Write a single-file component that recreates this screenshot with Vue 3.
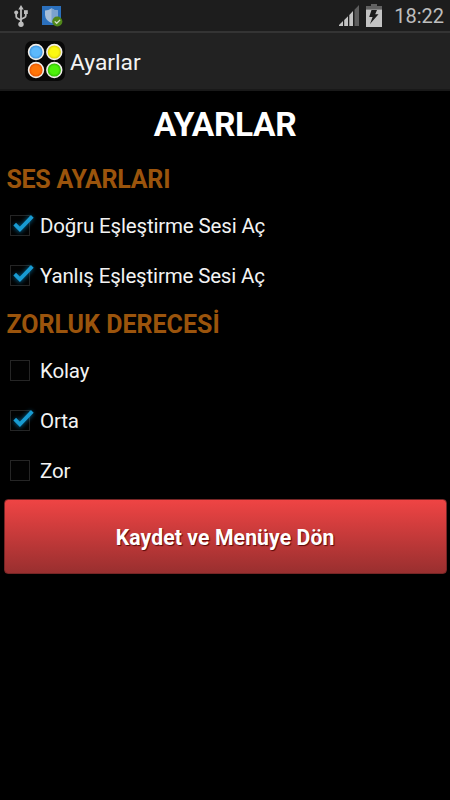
<script setup>
import { reactive } from 'vue'

const sections = reactive([
  {
    title: 'SES AYARLARI',
    cls: 'ses',
    options: [
      { label: 'Doğru Eşleştirme Sesi Aç', checked: true },
      { label: 'Yanlış Eşleştirme Sesi Aç', checked: true }
    ]
  },
  {
    title: 'ZORLUK DERECESİ',
    cls: 'zorluk',
    exclusive: true,
    options: [
      { label: 'Kolay', checked: false },
      { label: 'Orta', checked: true },
      { label: 'Zor', checked: false }
    ]
  }
])

const dots = [
  { x: 11, y: 11, fill: 'url(#blue)' },
  { x: 29.3, y: 11, fill: 'url(#yellow)' },
  { x: 11, y: 29, fill: 'url(#orange)' },
  { x: 29.3, y: 29, fill: 'url(#green)' }
]

function toggle(section, option) {
  if (section.exclusive) section.options.forEach((o) => (o.checked = o === option))
  else option.checked = !option.checked
}
</script>

<template>
  <div class="screen">
    <header class="status">
      <svg class="usb" width="16" height="23" viewBox="0 0 16 23">
        <path d="M7 0 L9.7 4.5 H4.3 Z" fill="#bdbdbd" />
        <g fill="none" stroke="#bdbdbd" stroke-width="1.8">
          <path d="M7 3 V20" />
          <path d="M2.2 8.5 V11.5 Q2.2 12.8 3.4 13.3 L7 15.3" />
          <path d="M11.8 8.5 V10.5 Q11.8 12 10.6 12.5 L7 14.3" />
        </g>
        <circle cx="2.2" cy="7.5" r="2" fill="#bdbdbd" />
        <rect x="10" y="5.2" width="3.8" height="3.8" fill="#bdbdbd" />
        <circle cx="7" cy="19.2" r="2.7" fill="#bdbdbd" />
      </svg>
      <svg class="shield" width="21" height="21" viewBox="0 0 21 21">
        <rect width="19" height="19" fill="#2b70bd" />
        <path d="M9.5 2.3 Q12.5 4.6 16 4.6 V9 Q15.5 14.5 9.5 17 Q3.5 14.5 3 9 V4.6 Q6.5 4.6 9.5 2.3Z" fill="#a8bfd8" />
        <path d="M9.5 2.3 Q12.5 4.6 16 4.6 V9 Q15.5 14.5 9.5 17Z" fill="#7ba2ce" />
        <circle cx="15.3" cy="15.5" r="5.1" fill="#508719" />
        <path d="M12.7 15.4 L14.7 17.3 L18.1 13.9" fill="none" stroke="#d4dfc8" stroke-width="1.3" />
      </svg>
      <span class="grow"></span>
      <svg class="signal" width="22" height="22" viewBox="0 0 22 22">
        <path d="M0 21 V20 L4 16 V21Z M5.2 21 V15 L9 11.2 V21Z M10.3 21 V10 L14 6 V21Z" fill="#c3c3c3" />
        <path d="M15.5 21 V4.8 L20 0 V21Z" fill="#5e5e5e" />
      </svg>
      <svg class="battery" width="16" height="23" viewBox="0 0 16 23">
        <path d="M5 0 H11 V2 H16 V6 H0 V2 H5Z" fill="#626262" />
        <rect y="5.6" width="16" height="17.4" fill="#c3c3c3" />
        <path d="M5.5 6 H11 L9.2 10.2 H12.5 L4 20 L6.6 13 H3.2Z" fill="#1d1d1d" />
      </svg>
      <span class="clock">18:22</span>
    </header>

    <div class="bar">
      <svg class="logo" width="40" height="40" viewBox="0 0 40 40">
        <defs>
          <radialGradient id="blue"><stop offset=".55" stop-color="#5cb9fc" /><stop offset="1" stop-color="#3388d5" /></radialGradient>
          <radialGradient id="yellow"><stop offset=".55" stop-color="#fbf811" /><stop offset="1" stop-color="#d3c60a" /></radialGradient>
          <radialGradient id="orange"><stop offset=".55" stop-color="#ff7508" /><stop offset="1" stop-color="#e04a00" /></radialGradient>
          <radialGradient id="green"><stop offset=".55" stop-color="#4df00b" /><stop offset="1" stop-color="#24a900" /></radialGradient>
        </defs>
        <rect width="40" height="40" rx="7" fill="#080808" />
        <circle v-for="d in dots" :key="d.fill" :cx="d.x" :cy="d.y" r="7.4" :fill="d.fill" stroke="#f1eee8" stroke-width="1.6" />
      </svg>
      <span class="name">Ayarlar</span>
    </div>

    <main>
      <h1><span>AYARLAR</span></h1>
      <section v-for="s in sections" :key="s.title">
        <h2><span :class="s.cls">{{ s.title }}</span></h2>
        <div v-for="o in s.options" :key="o.label" class="row" @click="toggle(s, o)">
          <svg class="check" width="36" height="36" viewBox="0 0 36 36">
            <rect x="6.5" y="7.5" width="19" height="20" fill="#020202" stroke="#252525" />
            <g v-if="o.checked">
              <path class="glow" d="M11 16.8 L15.7 21.6 L28 9" />
              <path class="tick" d="M10.7 16.2 L15.9 21.3 L28.3 8.4" />
            </g>
          </svg>
          <span class="label">{{ o.label }}</span>
        </div>
      </section>
      <button type="button"><span>Kaydet ve Menüye Dön</span></button>
    </main>
  </div>
</template>

<style>
body {
  background: #000;
}
</style>

<style scoped>
.screen {
  width: 450px;
  height: 800px;
  overflow: hidden;
  background: #000;
  color: #f3f3f3;
  font-family: Roboto, sans-serif;
}
.status {
  box-sizing: border-box;
  height: 31px;
  display: flex;
  align-items: flex-start;
  padding: 5px 6px 0 14px;
  background: #1d1d1d;
}
.shield {
  margin: 1px 0 0 12px;
}
.grow {
  flex: 1;
}
.battery {
  margin: -1px 12px 0 5px;
}
.clock {
  font-size: 20px;
  line-height: 22px;
  color: #bebebe;
}
.bar {
  box-sizing: border-box;
  height: 60px;
  display: flex;
  align-items: center;
  padding: 0 25px;
  background: #222;
  border-top: 2px solid #343434;
  border-bottom: 2px solid #191919;
}
.logo {
  margin-bottom: 1px;
}
.name {
  margin: 2px 0 0 5px;
  font-size: 22.8px;
}
h1,
h2 {
  margin: 0;
  font-weight: 700;
}
h1 {
  height: 65px;
  line-height: 68px;
  font-size: 33.5px;
  letter-spacing: -.4px;
  text-align: center;
  color: #fff;
}
h2 {
  height: 45px;
  line-height: 48px;
  padding-left: 6.4px;
  font-size: 25px;
  color: #9b540c;
}
.ses {
  letter-spacing: -.25px;
}
.row {
  height: 50px;
  display: flex;
  align-items: center;
  padding-left: 4px;
}
.label {
  font-size: 20.5px;
  line-height: 50px;
  letter-spacing: -.16px;
}
.tick {
  fill: none;
  stroke: #189bd2;
  stroke-width: 3.8;
}
.glow {
  fill: none;
  stroke: #087eb5;
  stroke-width: 5;
  opacity: .65;
  filter: blur(2px);
}
button {
  display: block;
  box-sizing: border-box;
  width: 443px;
  height: 75px;
  margin: 3px 0 0 3.6px;
  padding: 2px 0 0;
  border: 1px solid #762525;
  border-radius: 4px;
  background: linear-gradient(#ef4444, #992f2f);
  color: #fff;
  font: 700 21.2px Roboto, sans-serif;
  letter-spacing: .1px;
  text-shadow: 1px 1px 1px #5a0909;
}
</style>
